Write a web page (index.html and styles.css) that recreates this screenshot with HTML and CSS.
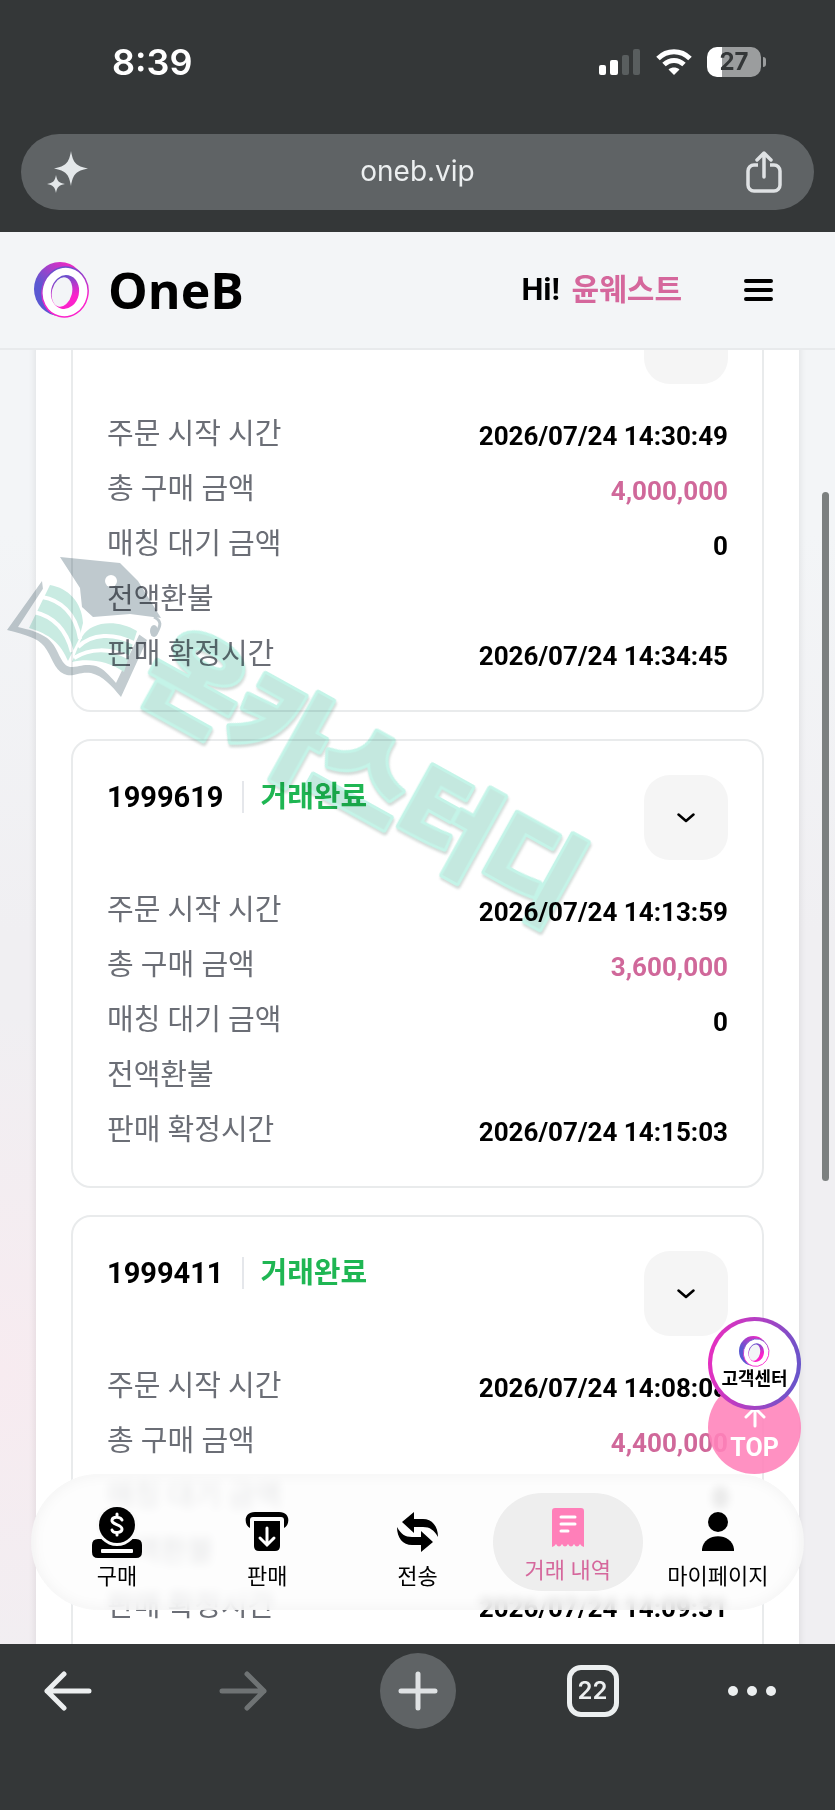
FILE: index.html
```html
<!DOCTYPE html>
<html lang="ko">
<head>
    <meta charset="UTF-8">
    <meta name="viewport" content="width=device-width, initial-scale=1.0">
    <title>OneB</title>
    <link rel="stylesheet" href="styles.css">
</head>
<body>
    <!-- Shared gradients and logo -->
    <svg class="defs" width="0" height="0" aria-hidden="true">
        <defs>
            <linearGradient id="ringSide" x1="0" y1="0.7" x2="0.6" y2="0">
                <stop offset="0.3" stop-color="#5a58d2"/>
                <stop offset="1" stop-color="#e52bc4"/>
            </linearGradient>
            <linearGradient id="ringHole" x1="0.2" y1="0" x2="0.7" y2="1">
                <stop offset="0.1" stop-color="#6a50cc"/>
                <stop offset="0.7" stop-color="#fb22cb"/>
            </linearGradient>
            <symbol id="ring" viewBox="0 0 56 56">
                <ellipse cx="26" cy="27" rx="26" ry="27" fill="url(#ringSide)"/>
                <ellipse cx="31" cy="30" rx="23" ry="25" transform="rotate(14 31 30)" fill="#fff" stroke="url(#ringHole)" stroke-width="1.5"/>
                <ellipse cx="31" cy="30" rx="14" ry="17" transform="rotate(12 31 30)" fill="url(#ringHole)"/>
                <ellipse cx="28" cy="30" rx="10" ry="15" transform="rotate(14 28 30)" fill="#f3f5f7"/>
            </symbol>
        </defs>
    </svg>

    <!-- Phone status bar -->
    <div class="status-bar">
        <span class="clock">8:39</span>
        <div class="status-icons">
            <svg width="42" height="27" viewBox="0 0 42 27">
                <rect x="0" y="16" width="7" height="10" rx="2" fill="#fff"/>
                <rect x="11" y="11" width="8" height="15" rx="2" fill="#fff"/>
                <rect x="23" y="6" width="7" height="20" rx="2" fill="#595e5f"/>
                <rect x="34" y="0" width="7" height="26" rx="2" fill="#595e5f"/>
            </svg>
            <svg width="36" height="27" viewBox="0 0 36 27" fill="none" stroke="#fff" stroke-width="5">
                <path d="M2 9.500C11 .5 25 .5 34 9.500"/>
                <path d="M8 15.500c6-5.500 14-5.500 20 0"/>
                <path d="M12.500 20.500c3.500-2.600 7.500-2.600 11 0L18 26z" fill="#fff" stroke="none"/>
            </svg>
            <div class="battery"><span>27</span></div>
        </div>
    </div>

    <!-- Address bar -->
    <div class="address-bar">
        <button class="icon-btn" aria-label="AI">
            <svg width="42" height="42" viewBox="0 0 42 42" fill="#e4e8ea">
                <path d="M24 0c2 12 5 15 17 17.500C29 20 26 23 24 35c-2-12-5-15-17-17.500C19 15 22 12 24 0z"/>
                <path d="M9 24c1 6 3 8 9 9-6 1-8 3-9 9-1-6-3-8-9-9 6-1 8-3 9-9z"/>
            </svg>
        </button>
        <input class="address" type="text" value="oneb.vip" aria-label="URL">
        <button class="icon-btn" aria-label="Share">
            <svg width="36" height="42" viewBox="0 0 36 42" fill="none" stroke="#dfe2e4" stroke-width="3.500" stroke-linecap="round" stroke-linejoin="round">
                <path d="M12 14H8a6 6 0 0 0-6 6v14a6 6 0 0 0 6 6h20a6 6 0 0 0 6-6V20a6 6 0 0 0-6-6h-4" stroke-linecap="butt"/>
                <path d="M18 26V3M11 9l7-7 7 7"/>
            </svg>
        </button>
    </div>

    <div class="page">
        <header class="top-bar">
            <a href="#" class="logo">
                <svg width="56" height="56"><use href="#ring"/></svg>
                <span>OneB</span>
            </a>
            <div class="user">Hi! <span class="user-name">윤웨스트</span></div>
            <button class="icon-btn" aria-label="Menu">
                <svg width="30" height="24" viewBox="0 0 30 24" stroke="#000" stroke-width="4" stroke-linecap="round">
                    <path d="M2 3h25M2 12h25M2 21h25"/>
                </svg>
            </button>
        </header>

        <main class="content">
            <section class="panel">
                <article class="order">
                    <div class="order-head">
                        <button class="toggle" aria-label="접기"></button>
                    </div>
                    <dl class="rows">
                        <div class="row"><dt>주문 시작 시간</dt><dd>2026/07/24 14:30:49</dd></div>
                        <div class="row"><dt>총 구매 금액</dt><dd class="amount">4,000,000</dd></div>
                        <div class="row"><dt>매칭 대기 금액</dt><dd>0</dd></div>
                        <div class="row"><dt>전액환불</dt><dd></dd></div>
                        <div class="row"><dt>판매 확정시간</dt><dd>2026/07/24 14:34:45</dd></div>
                    </dl>
                </article>

                <article class="order">
                    <div class="order-head">
                        <h2 class="order-id">1999619</h2>
                        <span class="order-state">거래완료</span>
                        <button class="toggle" aria-label="접기">
                            <svg width="18" height="10" viewBox="0 0 18 10" fill="none" stroke="#000" stroke-width="2.500" stroke-linecap="round" stroke-linejoin="round"><path d="M1.500 1.500L9 8l7.500-6.500"/></svg>
                        </button>
                    </div>
                    <dl class="rows">
                        <div class="row"><dt>주문 시작 시간</dt><dd>2026/07/24 14:13:59</dd></div>
                        <div class="row"><dt>총 구매 금액</dt><dd class="amount">3,600,000</dd></div>
                        <div class="row"><dt>매칭 대기 금액</dt><dd>0</dd></div>
                        <div class="row"><dt>전액환불</dt><dd></dd></div>
                        <div class="row"><dt>판매 확정시간</dt><dd>2026/07/24 14:15:03</dd></div>
                    </dl>
                </article>

                <article class="order">
                    <div class="order-head">
                        <h2 class="order-id">1999411</h2>
                        <span class="order-state">거래완료</span>
                        <button class="toggle" aria-label="접기">
                            <svg width="18" height="10" viewBox="0 0 18 10" fill="none" stroke="#000" stroke-width="2.500" stroke-linecap="round" stroke-linejoin="round"><path d="M1.500 1.500L9 8l7.500-6.500"/></svg>
                        </button>
                    </div>
                    <dl class="rows">
                        <div class="row"><dt>주문 시작 시간</dt><dd>2026/07/24 14:08:08</dd></div>
                        <div class="row"><dt>총 구매 금액</dt><dd class="amount">4,400,000</dd></div>
                        <div class="row"><dt>매칭 대기 금액</dt><dd>0</dd></div>
                        <div class="row"><dt>전액환불</dt><dd></dd></div>
                        <div class="row"><dt>판매 확정시간</dt><dd>2026/07/24 14:09:31</dd></div>
                    </dl>
                </article>
            </section>
        </main>

        <!-- Watermark -->
        <svg class="watermark" width="620" height="420" viewBox="0 0 620 420" aria-hidden="true">
            <path d="M42 41L7 90c20 5 30 8 37 16 8 10 10 24 20 28 9 4 15-3 27-1 12 3 20 12 30 24l26-57-10-7-90-10z" fill="#c3ccd0"/>
            <path d="M46 44L18 87c22 5 32 10 38 22 5 10 8 17 14 18 10 0 14-4 26-1 8 3 13 9 20 17l24-50-54-8-25-38z" fill="#fff"/>
            <path d="M50 45c18 3 32 17 33 38l-4 16-11 22C61 104 50 94 29 88z" fill="#c9ebe2"/>
            <path d="M137 91c-20-12-46-10-55 6l-10 25c14-4 36-2 52 10z" fill="#c9ebe2"/>
            <path d="M42 57c18 3 34 16 38 42M34 72c18 4 32 16 38 40M134 103c-20-10-42-10-56 4M128 117c-18-9-38-9-54 1" fill="none" stroke="#fff" stroke-width="4"/>
            <path d="M60 17l60 6 18 18 23 37-31-4-37 3-11-10-2-19z" fill="#bfc9ce"/>
            <ellipse cx="111" cy="41" rx="6" ry="6" fill="#fff"/>
            <path d="M154 77c8 4 7 8 2 17" fill="none" stroke="#bfc9ce" stroke-width="3"/>
            <ellipse cx="154" cy="91" rx="4" ry="6" fill="#bfc9ce"/>
            <text x="0" y="38" transform="translate(363 236) rotate(29)">온카스터디</text>
        </svg>

        <div class="scroll-thumb"></div>

        <a href="#" class="fab fab-top">
            <svg width="22" height="22" viewBox="0 0 22 22" fill="none" stroke="#fff" stroke-width="3" stroke-linecap="round" stroke-linejoin="round"><path d="M11 20V3M2 11l9-9 9 9"/></svg>
            <span>TOP</span>
        </a>
        <a href="#" class="fab fab-help">
            <svg width="31" height="31"><use href="#ring"/></svg>
            <span>고객센터</span>
        </a>

        <nav class="tab-bar">
            <a href="#" class="tab">
                <svg width="52" height="52" viewBox="0 0 52 52">
                    <path d="M7 33h7c6 8 18 8 24 0h7q6 0 6 6v7q0 6-6 6H7q-6 0-6-6v-7q0-6 6-6z"/>
                    <circle cx="26" cy="19" r="21" fill="#fafafa"/>
                    <circle cx="26" cy="19" r="18"/>
                    <rect x="10" y="43" width="32" height="4" rx="1" fill="#fff"/>
                    <path d="M31 14c-1-3-9-4-10 0-1 5 10 4 10 9 0 4-9 5-10 1M26 8v3M26 27v2" fill="none" stroke="#fff" stroke-width="3" stroke-linecap="round"/>
                </svg>
                <span>구매</span>
            </a>
            <a href="#" class="tab">
                <svg width="44" height="52" viewBox="0 0 44 52">
                    <path d="M10 6h24c12 0 11 13 5 16v-8q0-3-3-3H8q-3 0-3 3v8C-1 19-2 6 10 6z"/>
                    <path d="M9 15h26v25q0 5-5 5H14q-5 0-5-5z"/>
                    <path d="M22 22v15M15 32l7 7 7-7" fill="none" stroke="#fff" stroke-width="3" stroke-linecap="round"/>
                </svg>
                <span>판매</span>
            </a>
            <a href="#" class="tab">
                <svg width="43" height="52" viewBox="0 -6 43 52">
                    <path d="M6 10L18 0v7h9c9 0 15 7 15 18-4-7-8-10-15-10h-9v6z"/>
                    <path d="M6 10L18 0v7h9c9 0 15 7 15 18-4-7-8-10-15-10h-9v6z" transform="rotate(180 21.500 20)"/>
                </svg>
                <span>전송</span>
            </a>
            <a href="#" class="tab active">
                <svg width="32" height="44" viewBox="0 0 32 44">
                    <path d="M3 2h26q3 0 3 3v36q-2 0-4-3-3 5-6 0-3 5-6 0-3 5-6 0-3 5-6 0-2 3-4 3V5q0-3 3-3z" fill="#ff7fb9"/>
                    <path d="M9 11h14M9 18h14M9 25h7" stroke="#fff" stroke-width="3" stroke-linecap="round"/>
                </svg>
                <span>거래 내역</span>
            </a>
            <a href="#" class="tab">
                <svg width="32" height="52" viewBox="0 0 32 52">
                    <circle cx="16" cy="16" r="10"/>
                    <path d="M0 45v-2c2-17 30-17 32 0v2z"/>
                </svg>
                <span>마이페이지</span>
            </a>
        </nav>
    </div>

    <!-- Browser toolbar -->
    <div class="toolbar">
        <button class="icon-btn tool-back" aria-label="Back">
            <svg width="48" height="40" viewBox="0 0 48 40" fill="none" stroke="#eceff0" stroke-width="5" stroke-linecap="round" stroke-linejoin="round"><path d="M45 20H3M20 3L3 20l17 17"/></svg>
        </button>
        <button class="icon-btn" aria-label="Forward">
            <svg width="48" height="40" viewBox="0 0 48 40" fill="none" stroke="#6f7374" stroke-width="5" stroke-linecap="round" stroke-linejoin="round"><path d="M3 20h42M28 3l17 17-17 17"/></svg>
        </button>
        <button class="icon-btn tool-new" aria-label="New tab">
            <svg width="40" height="40" viewBox="0 0 40 40" stroke="#dfe2e4" stroke-width="5" stroke-linecap="round"><path d="M20 3v34M3 20h34"/></svg>
        </button>
        <button class="icon-btn tool-tabs" aria-label="Tabs">22</button>
        <button class="icon-btn tool-more" aria-label="More">
            <svg width="48" height="12" viewBox="0 0 48 12" fill="#eceff0"><circle cx="5" cy="6" r="5"/><circle cx="24" cy="6" r="5"/><circle cx="43" cy="6" r="5"/></svg>
        </button>
    </div>
</body>
</html>
```

FILE: styles.css
```css
/* General Reset */
* {
    margin: 0;
    padding: 0;
    box-sizing: border-box;
}

body {
    display: flex;
    flex-direction: column;
    height: 100vh;
    background-color: #343738;
    color: #000;
    font-family: Roboto, 'Noto Sans CJK KR', sans-serif;
}

a {
    color: inherit;
    text-decoration: none;
}

svg {
    display: block;
    flex-shrink: 0;
}

.defs {
    position: absolute;
}

.icon-btn {
    display: flex;
    align-items: center;
    justify-content: center;
    background: none;
    border: none;
    cursor: pointer;
}

/* Status bar */
.status-bar {
    display: flex;
    justify-content: space-between;
    align-items: center;
    height: 124px;
    padding: 0 74px 0 112px;
    color: #fff;
}

.clock {
    font-family: Inter, sans-serif;
    font-size: 36px;
    font-weight: 600;
}

.status-icons {
    display: flex;
    align-items: center;
    gap: 15px;
}

.battery {
    position: relative;
    width: 54px;
    height: 30px;
    border-radius: 10px;
    background: linear-gradient(to right, #fff 27%, #9b9d9e 27%);
    color: #343738;
    font-family: Inter, sans-serif;
    font-size: 24px;
    font-weight: 700;
    line-height: 30px;
    text-align: center;
}

.battery::after {
    content: "";
    position: absolute;
    top: 10px;
    right: -5px;
    width: 3px;
    height: 10px;
    border-radius: 0 4px 4px 0;
    background: #9b9d9e;
}

/* Address bar */
.address-bar {
    display: flex;
    align-items: center;
    justify-content: space-between;
    height: 76px;
    margin: 10px 21px 22px;
    padding: 0 32px 0 26px;
    border-radius: 38px;
    background-color: #5f6365;
}

.address {
    flex: 1;
    min-width: 0;
    padding-bottom: 2px;
    background: none;
    border: none;
    color: #eceff0;
    font-family: Inter, sans-serif;
    font-size: 28px;
    text-align: center;
}

/* Web page area */
.page {
    position: relative;
    display: flex;
    flex-direction: column;
    flex: 1;
    min-height: 0;
    overflow: hidden;
    background: radial-gradient(circle at 0 1140px, #f7ebf0, rgba(247, 235, 240, 0) 360px), linear-gradient(#f3f5f7, #f3f5f7 300px, #f0eff2 700px, #f0eff2);
}

.top-bar {
    display: flex;
    align-items: center;
    flex-shrink: 0;
    height: 118px;
    padding: 0 61px 0 34px;
    border-bottom: 2px solid #e8eaec;
    background-color: #f3f5f7;
}

.logo {
    display: flex;
    align-items: center;
    gap: 18px;
    margin-right: auto;
    font-family: 'Open Sans', sans-serif;
    font-size: 50px;
    font-weight: 700;
    line-height: 56px;
}

.user {
    margin-right: 62px;
    padding-bottom: 6px;
    font-size: 31px;
    font-weight: 700;
}

.user-name {
    margin-left: 4px;
    color: #d5679c;
    font-size: 30px;
}

.content {
    flex: 1;
    min-height: 0;
    overflow: hidden;
    padding: 0 36px;
}

/* The list is scrolled so that the first card starts under the header */
.panel {
    display: flex;
    flex-direction: column;
    gap: 27px;
    margin-top: -122px;
    padding: 35px;
    background-color: #fff;
    box-shadow: 0 0 8px rgba(0, 0, 0, 0.1);
}

/* Order card */
.order {
    padding: 34px;
    border: 2px solid #e9ebec;
    border-radius: 20px;
}

.order-head {
    display: flex;
    align-items: flex-start;
    height: 85px;
    margin-bottom: 29px;
    line-height: 44px;
}

.order-id {
    font-size: 29px;
    font-weight: 700;
}

.order-state {
    display: flex;
    align-items: center;
    color: #1fb653;
    font-size: 29px;
    font-weight: 700;
}

.order-state::before {
    content: "";
    width: 2px;
    height: 32px;
    margin: 0 16px 0 19px;
    background-color: #e5e7eb;
}

.toggle {
    display: flex;
    align-items: center;
    justify-content: center;
    width: 84px;
    height: 85px;
    margin-left: auto;
    border: none;
    border-radius: 26px;
    background-color: #f5f5f5;
    cursor: pointer;
}

.rows {
    display: flex;
    flex-direction: column;
    gap: 12px;
}

.row {
    display: flex;
    justify-content: space-between;
    align-items: center;
    line-height: 43px;
}

.row dt {
    color: #6b6e76;
    font-size: 29px;
}

.row dd {
    padding-top: 4px;
    font-size: 26px;
    font-weight: 700;
    line-height: 39px;
}

.row .amount {
    color: #d0689a;
}

/* Watermark */
.watermark {
    position: absolute;
    top: 308px;
    left: 0;
    mix-blend-mode: multiply;
    pointer-events: none;
}

.watermark text {
    fill: #c4e8df;
    stroke: #c4f4e8;
    stroke-width: 6px;
    stroke-linejoin: round;
    paint-order: stroke;
    filter: drop-shadow(2px 2px 1px #d3dbd8);
    font-family: 'Noto Sans CJK KR', sans-serif;
    font-size: 104px;
    font-weight: 900;
    text-anchor: middle;
}

.scroll-thumb {
    position: absolute;
    top: 260px;
    right: 6px;
    width: 7px;
    height: 689px;
    border-radius: 4px;
    background-color: #7c8080;
}

/* Floating buttons */
.fab {
    position: absolute;
    right: 34px;
    display: flex;
    flex-direction: column;
    align-items: center;
    width: 93px;
    height: 93px;
    border-radius: 50%;
}

.fab-top {
    bottom: 170px;
    gap: 4px;
    padding-top: 25px;
    background-color: rgba(255, 130, 186, 0.88);
    color: #fff;
    font-size: 25px;
    font-weight: 700;
    line-height: 32px;
}

.fab-help {
    bottom: 234px;
    padding-top: 15px;
    border: 4px solid transparent;
    background: linear-gradient(#fff, #fff) padding-box, linear-gradient(100deg, #ee2cc0, #a045c4 60%, #5a58cc) border-box;
    font-size: 18px;
    font-weight: 700;
    line-height: 24px;
}

/* Bottom tab bar */
.tab-bar {
    position: absolute;
    right: 31px;
    bottom: 34px;
    left: 31px;
    display: flex;
    align-items: center;
    height: 136px;
    padding: 0 11px;
    border-radius: 68px;
    background-color: rgba(253, 253, 253, 0.84);
    box-shadow: inset 0 0 16px rgba(0, 0, 0, 0.05);
    backdrop-filter: blur(5px);
    font-size: 22px;
    line-height: 32px;
}

.tab {
    display: flex;
    flex: 1;
    flex-direction: column;
    align-items: center;
    justify-content: center;
    gap: 3px;
    height: 98px;
    padding-top: 15px;
    border-radius: 49px;
}

.tab.active {
    gap: 5px;
    padding-top: 9px;
    background-color: #eee;
    color: #d5679c;
}

/* Browser toolbar */
.toolbar {
    display: grid;
    grid-template-columns: 155fr 175fr 175fr 175fr 155fr;
    align-items: center;
    justify-items: center;
    height: 166px;
    padding-bottom: 73px;
}

.tool-back {
    padding-right: 20px;
}

.tool-new {
    width: 76px;
    height: 76px;
    border-radius: 50%;
    background-color: #5f6365;
}

.tool-tabs {
    width: 52px;
    height: 52px;
    border: 5px solid #eceff0;
    border-radius: 14px;
    color: #eceff0;
    font-family: Inter, sans-serif;
    font-size: 24px;
    font-weight: 600;
}

.tool-more {
    padding-right: 11px;
}
```
